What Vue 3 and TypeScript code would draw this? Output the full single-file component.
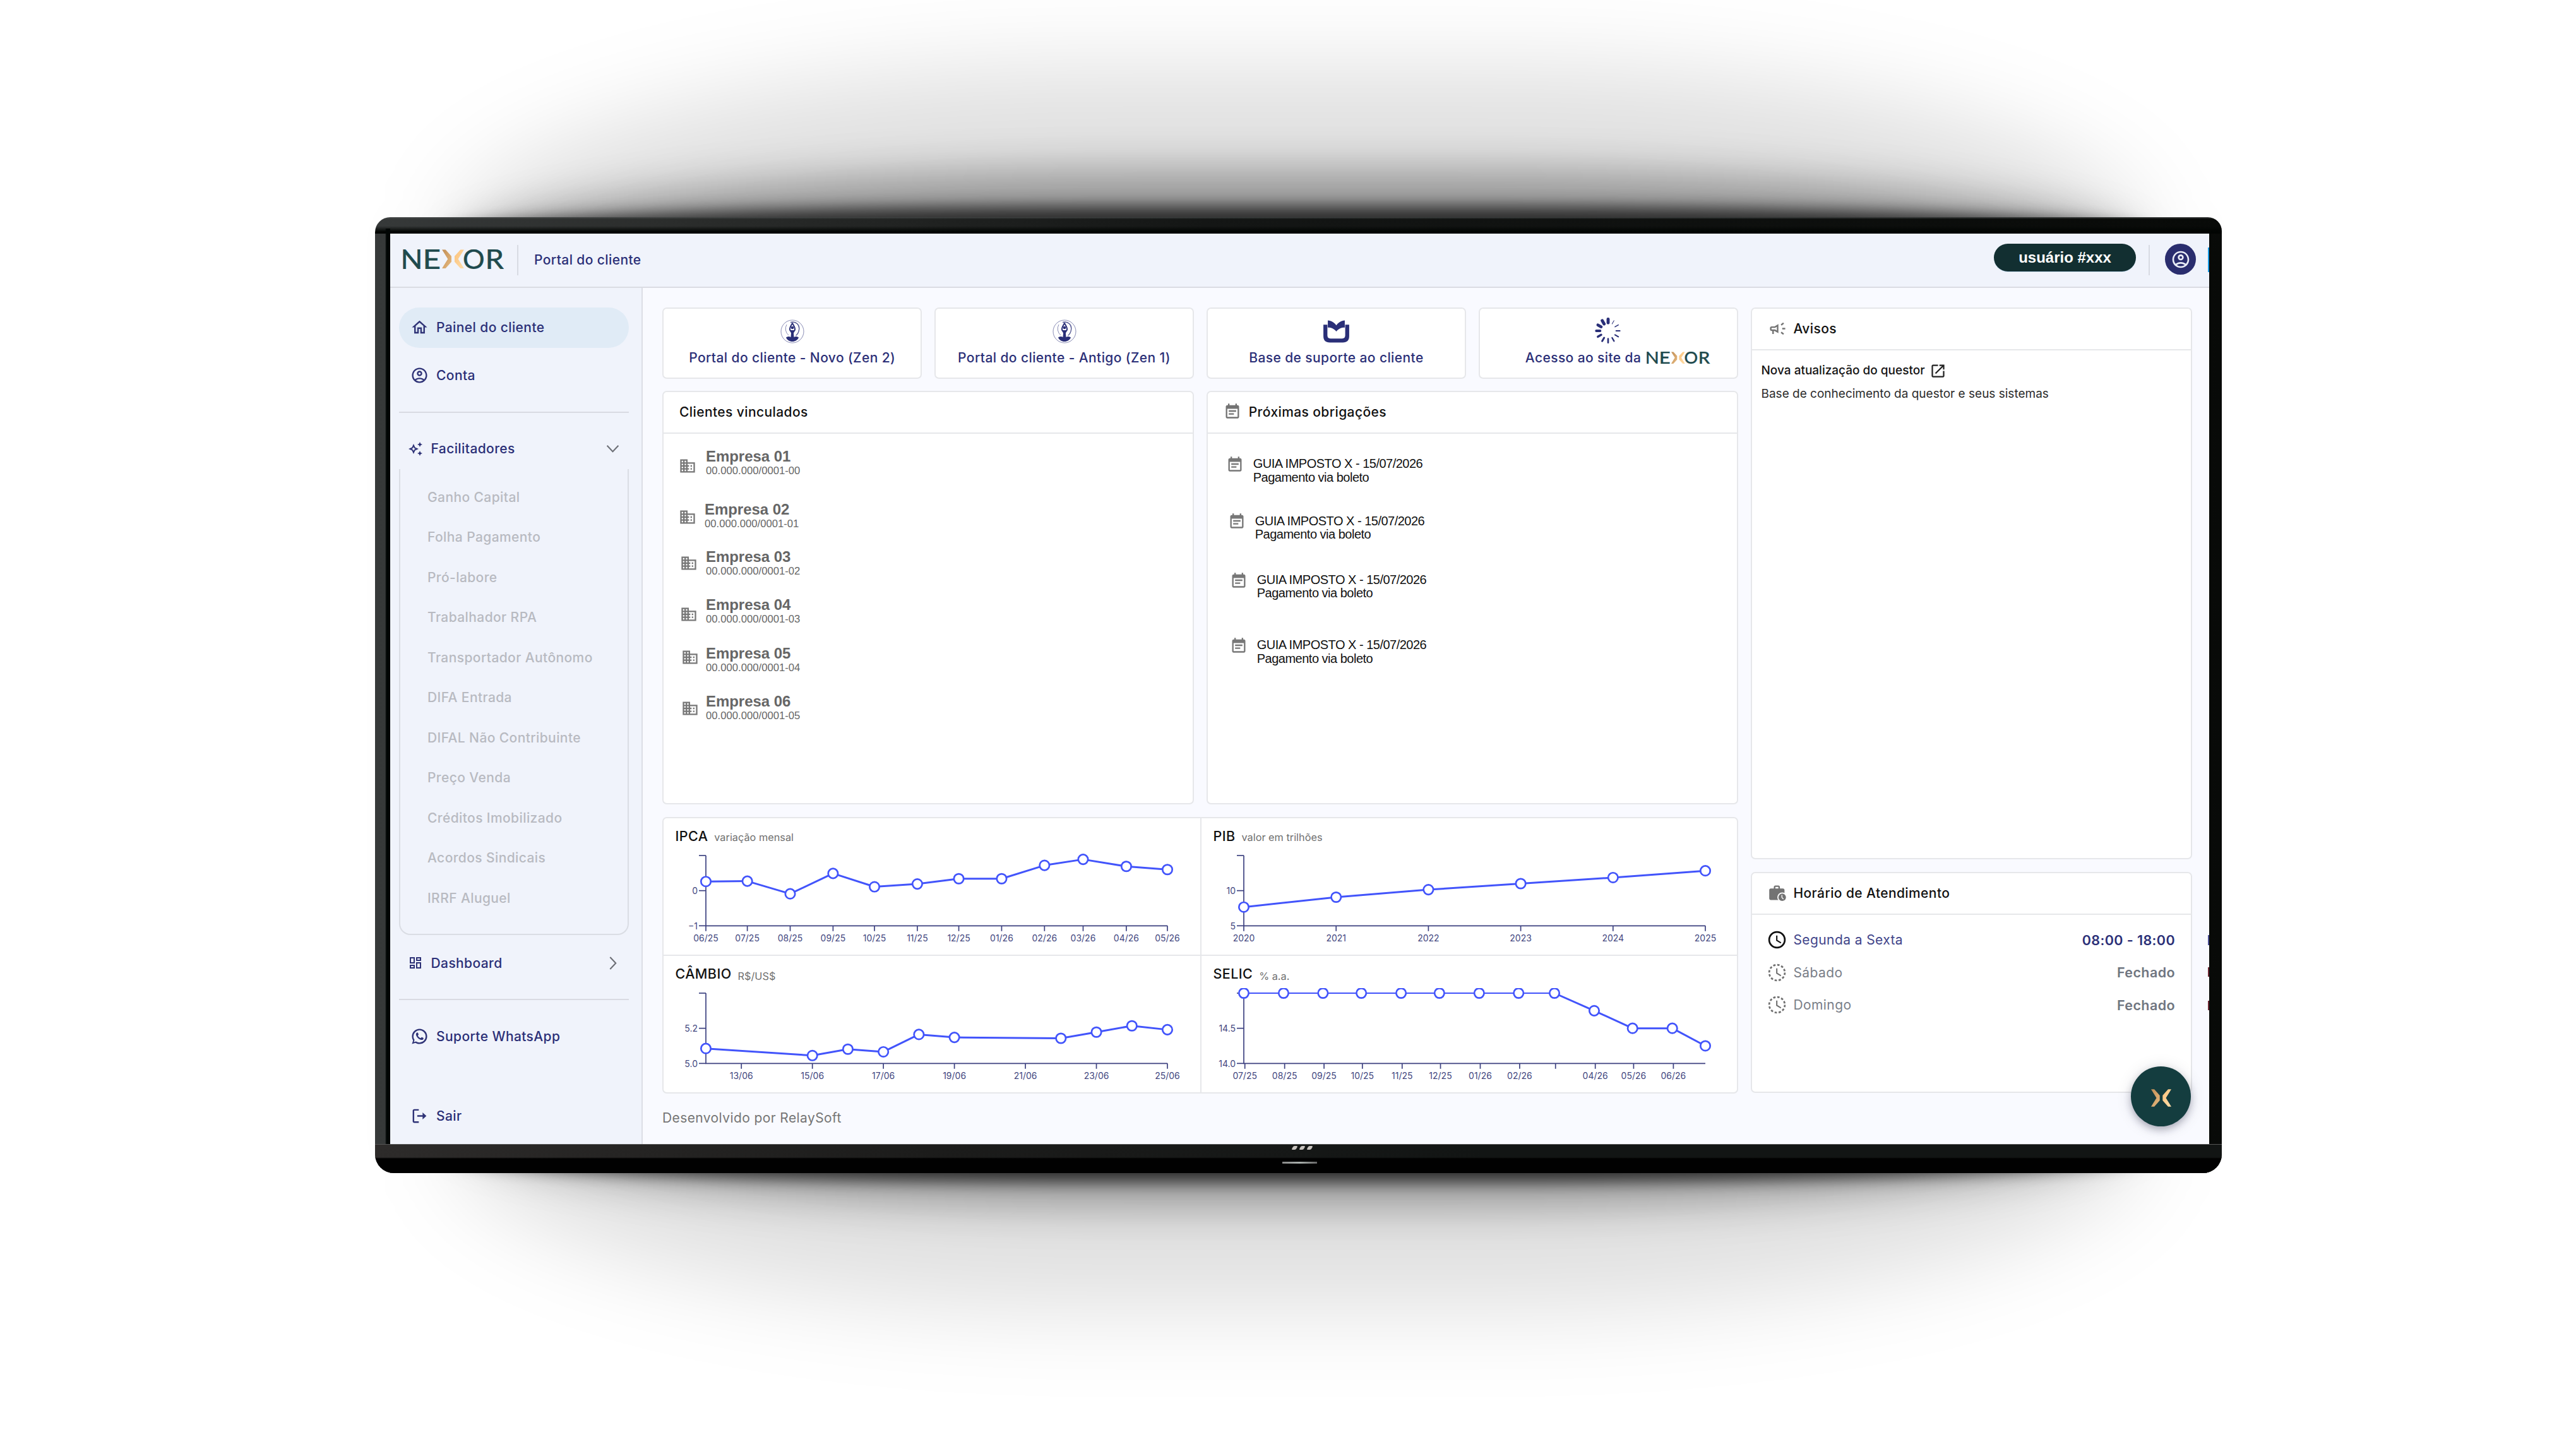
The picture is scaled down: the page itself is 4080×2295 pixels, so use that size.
<script setup lang="ts">
interface Entry { id: string; icon: { x: number; y: number }; text: { x: number; y: number } }
interface Chart {
  title: string
  unit: string
  domain: [number, number]
  yTicks: { value: number; label: string }[]
  span: number
  xTicks: { at: number; label: string }[]
  points: [number, number][]
}

const icons: Record<string, string> = {
  home: 'm12 5.69 5 4.5V18h-2v-6H9v6H7v-7.81l5-4.5M12 3 2 12h3v8h6v-6h2v6h6v-8h3L12 3z',
  account:
    'M12 2C6.48 2 2 6.48 2 12s4.48 10 10 10 10-4.48 10-10S17.52 2 12 2zM7.35 18.5C8.66 17.56 10.26 17 12 17s3.34.56 4.65 1.5c-1.31.94-2.91 1.5-4.65 1.5s-3.34-.56-4.65-1.5zm10.79-1.38C16.45 15.8 14.32 15 12 15s-4.45.8-6.14 2.12C4.7 15.73 4 13.95 4 12c0-4.42 3.58-8 8-8s8 3.58 8 8c0 1.95-.7 3.73-1.86 5.12zM12 6c-1.93 0-3.5 1.57-3.5 3.5S10.07 13 12 13s3.5-1.57 3.5-3.5S13.93 6 12 6zm0 5c-.83 0-1.5-.67-1.5-1.5S11.17 8 12 8s1.5.67 1.5 1.5S12.83 11 12 11z',
  sparkle:
    'M19 9l1.25-2.75L23 5l-2.75-1.25L19 1l-1.25 2.75L15 5l2.75 1.25zm0 6l-1.25 2.75L15 19l2.75 1.25L19 23l1.25-2.75L23 19l-2.75-1.25zM11.5 9.5 9 4 6.5 9.5 1 12l5.5 2.5L9 20l2.5-5.5L17 12l-5.5-2.5zm-1.51 3.49L9 15.17l-.99-2.18L5.83 12l2.18-.99L9 8.83l.99 2.18 2.18.99-2.18.99z',
  dashboard:
    'M19 5v2h-4V5h4M9 5v6H5V5h4m10 8v6h-4v-6h4M9 17v2H5v-2h4M21 3h-8v6h8V3zM11 3H3v10h8V3zm10 8h-8v10h8V11zm-10 4H3v6h8v-6z',
  whatsapp:
    'M16.75 13.96c.25.13.41.2.46.3.06.11.04.61-.21 1.18-.2.56-1.24 1.1-1.7 1.12-.46.02-.47.36-2.96-.73-2.49-1.09-3.99-3.75-4.11-3.92-.12-.17-.96-1.38-.92-2.61.05-1.22.69-1.8.95-2.04.24-.26.51-.29.68-.26h.47c.15 0 .36-.06.55.45l.69 1.87c.06.13.1.28.01.44l-.27.41-.39.42c-.12.12-.26.25-.12.5.12.26.62 1.09 1.32 1.78.91.88 1.71 1.17 1.95 1.3.24.14.39.12.54-.04l.81-.94c.19-.25.35-.19.58-.11l1.67.88M12 2a10 10 0 0 1 10 10 10 10 0 0 1-10 10c-1.97 0-3.8-.57-5.35-1.55L2 22l1.55-4.65A9.969 9.969 0 0 1 2 12 10 10 0 0 1 12 2m0 2a8 8 0 0 0-8 8c0 1.72.54 3.31 1.46 4.61L4.5 19.5l2.89-.96A7.95 7.95 0 0 0 12 20a8 8 0 0 0 8-8 8 8 0 0 0-8-8z',
  logout: 'M5 5h6V3H5c-1.1 0-2 .9-2 2v14c0 1.1.9 2 2 2h6v-2H5zM21 12l-5-4.5V11H9v2h7v3.5z',
  company:
    'M12 7V3H2v18h20V7H12zM6 19H4v-2h2v2zm0-4H4v-2h2v2zm0-4H4V9h2v2zm0-4H4V5h2v2zm4 12H8v-2h2v2zm0-4H8v-2h2v2zm0-4H8V9h2v2zm0-4H8V5h2v2zm10 12h-8v-2h2v-2h-2v-2h2v-2h-2V9h8v10zm-2-8h-2v2h2v-2zm0 4h-2v2h2v-2z',
  note: 'M19 4h-1V2h-2v2H8V2H6v2H5c-1.11 0-1.99.9-1.99 2L3 20c0 1.1.89 2 2 2h14c1.1 0 2-.9 2-2V6c0-1.1-.9-2-2-2zm0 16H5V9h14v11zM7 11h10v2H7zM7 15h7v2H7z',
  campaign:
    'M18 11v2h4v-2h-4zm-2 6.61c.96.71 2.21 1.65 3.2 2.39.4-.53.8-1.07 1.2-1.6-.99-.74-2.24-1.68-3.2-2.4-.4.54-.8 1.08-1.2 1.61zM20.4 5.6c-.4-.53-.8-1.07-1.2-1.6-.99.74-2.24 1.68-3.2 2.4.4.53.8 1.07 1.2 1.6.96-.72 2.21-1.65 3.2-2.4zM4 9c-1.1 0-2 .9-2 2v2c0 1.1.9 2 2 2h1v4h2v-4h1l5 3V6L8 9H4zm5.03 1.71L11 9.53v4.94l-1.97-1.18-.48-.29H4v-2h4.55l.48-.29z',
  external:
    'M19 19H5V5h7V3H5c-1.11 0-2 .9-2 2v14c0 1.1.89 2 2 2h14c1.1 0 2-.9 2-2v-7h-2v7zM14 3v2h3.59l-9.83 9.83 1.41 1.41L19 6.41V10h2V3h-7z',
}

const facilitators = [
  'Ganho Capital', 'Folha Pagamento', 'Pró-labore', 'Trabalhador RPA', 'Transportador Autônomo', 'DIFA Entrada',
  'DIFAL Não Contribuinte', 'Preço Venda', 'Créditos Imobilizado', 'Acordos Sindicais', 'IRRF Aluguel',
]

// Offsets of each entry inside its card body
const companies: Entry[] = [
  { id: '01', icon: { x: 24, y: 37.5 }, text: { x: 67, y: 22.5 } },
  { id: '02', icon: { x: 24, y: 118.5 }, text: { x: 65, y: 106.5 } },
  { id: '03', icon: { x: 26, y: 191.5 }, text: { x: 67, y: 181.5 } },
  { id: '04', icon: { x: 26, y: 272.3 }, text: { x: 67, y: 257.2 } },
  { id: '05', icon: { x: 27.5, y: 340.8 }, text: { x: 67, y: 334.2 } },
  { id: '06', icon: { x: 27.5, y: 421.8 }, text: { x: 67, y: 410.5 } },
]
const guides: Entry[] = [
  { id: '1', icon: { x: 29, y: 34 }, text: { x: 72, y: 37.8 } },
  { id: '2', icon: { x: 32, y: 124.5 }, text: { x: 75, y: 128 } },
  { id: '3', icon: { x: 35, y: 218 }, text: { x: 78, y: 221.3 } },
  { id: '4', icon: { x: 35, y: 321 }, text: { x: 78, y: 324.7 } },
]

const ticks = (at: number[], labels: string[]) => at.map((a, i) => ({ at: a, label: labels[i] }))
const months = [0, 117, 238, 359, 476, 597, 714, 835, 956, 1065, 1187, 1303]
const selicDays = [0, 112, 223, 331, 443, 551, 663, 774, 875, 987, 1095, 1207, 1300]

const charts: Chart[] = [
  {
    title: 'IPCA', unit: 'variação mensal', domain: [-1, 1], span: 1303,
    yTicks: [{ value: 1, label: '' }, { value: 0, label: '0' }, { value: -1, label: '−1' }],
    xTicks: ticks(months, ['06/25', '07/25', '08/25', '09/25', '10/25', '11/25', '12/25', '01/26', '02/26', '03/26', '04/26', '05/26']),
    points: [0.26, 0.27, -0.09, 0.49, 0.11, 0.19, 0.34, 0.34, 0.72, 0.89, 0.69, 0.6].map((v, i) => [months[i], v]),
  },
  {
    title: 'PIB', unit: 'valor em trilhões', domain: [5, 15], span: 5,
    yTicks: [{ value: 15, label: '' }, { value: 10, label: '10' }, { value: 5, label: '5' }],
    xTicks: ticks([0, 1, 2, 3, 4, 5], ['2020', '2021', '2022', '2023', '2024', '2025']),
    points: [7.66, 9.07, 10.14, 11, 11.86, 12.83].map((v, i) => [i, v]),
  },
  {
    title: 'CÂMBIO', unit: 'R$/US$', domain: [5, 5.4], span: 13,
    yTicks: [{ value: 5.4, label: '' }, { value: 5.2, label: '5.2' }, { value: 5, label: '5.0' }],
    xTicks: ticks([1, 3, 5, 7, 9, 11, 13], ['13/06', '15/06', '17/06', '19/06', '21/06', '23/06', '25/06']),
    points: [[0, 5.085], [3, 5.045], [4, 5.081], [5, 5.066], [6, 5.165], [7, 5.148], [10, 5.143], [11, 5.178], [12, 5.214], [13, 5.192]],
  },
  {
    title: 'SELIC', unit: '% a.a.', domain: [14, 15], span: 1300,
    yTicks: [{ value: 15, label: '' }, { value: 14.5, label: '14.5' }, { value: 14, label: '14.0' }],
    xTicks: ticks(
      selicDays.slice(0, 12).map((d) => d + 3),
      ['07/25', '08/25', '09/25', '10/25', '11/25', '12/25', '01/26', '02/26', '', '04/26', '05/26', '06/26'],
    ),
    points: [15, 15, 15, 15, 15, 15, 15, 15, 15, 14.75, 14.5, 14.5, 14.25].map((v, i) => [selicDays[i], v]),
  },
]

const AXIS = { left: 67, right: 798, top: 14, bottom: 125.3 }
const px = (c: Chart, v: number) => AXIS.left + (v / c.span) * (AXIS.right - AXIS.left)
const py = (c: Chart, v: number) =>
  AXIS.bottom - ((v - c.domain[0]) / (c.domain[1] - c.domain[0])) * (AXIS.bottom - AXIS.top)
// A stretch that runs along the top of the domain is drawn as a hairline
const segments = (c: Chart) =>
  c.points.slice(1).map(([x, y], i) => {
    const [x0, y0] = c.points[i]
    const flat = y === c.domain[1] && y0 === y
    return { x1: px(c, x0), y1: py(c, y0), x2: px(c, x), y2: py(c, y), w: flat ? 1.8 : 3 }
  })

const hours = [
  { day: 'Segunda a Sexta', time: '08:00 - 18:00', open: true },
  { day: 'Sábado', time: 'Fechado', open: false },
  { day: 'Domingo', time: 'Fechado', open: false },
]
const spokes = [4.4, 0.9, 1.4, 1.7, 1.9, 2.1, 2.4, 2.7, 3.1, 3.6, 4.2, 4.4]
const at = (p: { x: number; y: number }) => ({ left: p.x + 'px', top: p.y + 'px' })
</script>

<template>
  <div class="stage">
    <svg class="defs" width="0" height="0" aria-hidden="true">
      <defs>
        <linearGradient id="gold-a" x1="0" y1="0" x2="1" y2="1">
          <stop offset="0" stop-color="#c08d55" /><stop offset="1" stop-color="#e8bb80" />
        </linearGradient>
        <linearGradient id="gold-b" x1="0" y1="0" x2="1" y2="1">
          <stop offset="0" stop-color="#fbc27c" /><stop offset="1" stop-color="#ffdda8" />
        </linearGradient>
        <clipPath id="plot"><rect x="40" y="6" width="790" height="130" /></clipPath>
        <symbol id="mark" viewBox="0 0 35 30">
          <path d="M0 0h5.500L15 10.500v9L5.500 30H0l9.300-15z" fill="url(#gold-a)" />
          <path d="M35 0h-5.500L20 10.500v9L29.500 30H35l-9.300-15z" fill="url(#gold-b)" />
        </symbol>
        <symbol id="wordmark" viewBox="0 0 161 31">
          <g font-family="Lato, sans-serif" font-size="42.5" fill="#1f4a4d" stroke="#1f4a4d" stroke-width=".5">
            <text x="-3.5" y="30.5" textLength="35.5" lengthAdjust="spacingAndGlyphs">N</text>
            <text x="31.5" y="30.5" textLength="29" lengthAdjust="spacingAndGlyphs">E</text>
            <text x="95" y="30.5" textLength="35" lengthAdjust="spacingAndGlyphs">O</text>
            <text x="130.5" y="30.5" textLength="30" lengthAdjust="spacingAndGlyphs">R</text>
          </g>
          <use href="#mark" x="62" y="0.3" width="35" height="30" />
        </symbol>
      </defs>
    </svg>

    <div class="glow glow-far"></div>
    <div class="glow glow-mid"></div>
    <div class="glow glow-near"></div>

    <div class="monitor">
      <div class="screen">
        <header class="topbar">
          <svg class="logo"><use href="#wordmark" /></svg>
          <i class="vline first"></i>
          <span class="app-name">Portal do cliente</span>
          <span class="user">usuário #xxx</span>
          <i class="vline"></i>
          <span class="avatar"><svg viewBox="0 0 24 24"><path :d="icons.account" /></svg></span>
        </header>

        <div class="body">
          <nav class="sidebar">
            <a class="item active"><svg viewBox="0 0 24 24"><path :d="icons.home" /></svg>Painel do cliente</a>
            <a class="item conta"><svg viewBox="0 0 24 24"><path :d="icons.account" /></svg>Conta</a>
            <hr />
            <a class="item group">
              <svg class="small" viewBox="0 0 24 24"><path :d="icons.sparkle" /></svg>Facilitadores
              <svg class="chevron" viewBox="0 0 20 20"><path d="M1.500 5.500 10 14.500 18.500 5.500" /></svg>
            </a>
            <div class="submenu"><a v-for="f in facilitators" :key="f">{{ f }}</a></div>
            <a class="item group dash">
              <svg class="small" viewBox="0 0 24 24"><path :d="icons.dashboard" /></svg>Dashboard
              <svg class="chevron" viewBox="0 0 20 20"><path d="M6 1l8.500 9-8.500 9" /></svg>
            </a>
            <hr />
            <a class="item"><svg viewBox="0 0 24 24"><path :d="icons.whatsapp" /></svg>Suporte WhatsApp</a>
            <a class="item exit"><svg viewBox="0 0 24 24"><path :d="icons.logout" /></svg>Sair</a>
          </nav>

          <main class="main">
            <section class="left">
              <div class="shortcuts">
                <a v-for="t in ['Portal do cliente - Novo (Zen 2)', 'Portal do cliente - Antigo (Zen 1)']" :key="t" class="card shortcut">
                  <svg viewBox="0 0 38 38" fill="none" stroke="#2a2f78">
                    <circle cx="19" cy="19" r="18" stroke-width="1" opacity=".55" />
                    <path d="M10 8a13.500 13.500 0 0 0 3 17" stroke-width="1" opacity=".55" />
                    <path d="M16 4.500C25 2 31 9 29.500 16.500 29 21 26.500 24 24.500 25.500" stroke-width="1.400" opacity=".8" />
                    <path d="M19 5.500c-1 3-4.500 6.500-4 10.500.3 2 2 3 2.500 4M19 5.500c1 3 4.500 6.500 4 10.500-.3 2-2 3-2.500 4" stroke-width="2" />
                    <circle cx="19" cy="13" r="2.300" fill="#2a2f78" stroke="none" />
                    <path d="M15.800 17h6.400l-1.200 5 .5 6c2-1.500 5-1.500 7.500.5-1.500 4-5.500 6.500-10 6.500s-8.500-2.500-10-6.500c2.500-2 5.500-2 7.500-.5l.5-6z" fill="#2a2f78" stroke="none" />
                  </svg>
                  <span>{{ t }}</span>
                </a>
                <a class="card shortcut">
                  <svg class="book" viewBox="0 0 42 37" fill="#2a2f78">
                    <path d="M0 7.500h6.500V25c0 3.300 1.700 5 5 5h19c3.300 0 5-1.700 5-5V7.500H42V26c0 7-3.500 10.500-10.500 10.500h-21C3.500 36.500 0 33 0 26z" />
                    <path d="M7.200.5C13 1 18 4 21 8.500 24 4 29 1 34.800.5v11.500C29 12 24.500 14 21 18.500 17.500 14 13 12 7.200 12z" />
                  </svg>
                  <span>Base de suporte ao cliente</span>
                </a>
                <a class="card shortcut">
                  <svg class="spin" viewBox="-20 -20 40 40" stroke="#2a2f78" stroke-linecap="round">
                    <line v-for="(w, i) in spokes" :key="i" x1="0" y1="-11.500" x2="0" y2="-17" :stroke-width="w" :transform="`rotate(${i * 30})`" />
                  </svg>
                  <span class="site"><span>Acesso ao site da</span><svg class="logo-sm"><use href="#wordmark" /></svg></span>
                </a>
              </div>

              <div class="lists">
                <div class="card">
                  <h2>Clientes vinculados</h2>
                  <div class="canvas">
                    <template v-for="c in companies" :key="c.id">
                      <svg class="glyph" viewBox="0 0 24 24" :style="at(c.icon)"><path :d="icons.company" /></svg>
                      <div class="company" :style="at(c.text)">
                        <b>Empresa {{ c.id }}</b>
                        <span>00.000.000/0001-0{{ +c.id - 1 }}</span>
                      </div>
                    </template>
                  </div>
                </div>
                <div class="card">
                  <h2><svg viewBox="0 0 24 24"><path :d="icons.note" /></svg>Próximas obrigações</h2>
                  <div class="canvas">
                    <template v-for="g in guides" :key="g.id">
                      <svg class="glyph" viewBox="0 0 24 24" :style="at(g.icon)"><path :d="icons.note" /></svg>
                      <div class="guide" :style="at(g.text)">GUIA IMPOSTO X - 15/07/2026<br />Pagamento via boleto</div>
                    </template>
                  </div>
                </div>
              </div>

              <div class="card charts">
                <div v-for="c in charts" :key="c.title" class="chart">
                  <h3>{{ c.title }}<small>{{ c.unit }}</small></h3>
                  <svg width="850" height="165">
                    <g class="axis">
                      <path :d="`M${AXIS.left} ${AXIS.top}V${AXIS.bottom}H${AXIS.right}`" />
                      <path v-for="t in c.yTicks" :key="t.value" :d="`M${AXIS.left} ${py(c, t.value)}h-11`" />
                      <path v-for="t in c.xTicks" :key="t.at" :d="`M${px(c, t.at)} ${AXIS.bottom}v8.500`" />
                    </g>
                    <g class="labels">
                      <text v-for="t in c.yTicks" :key="t.value" :x="AXIS.left - 13" :y="py(c, t.value) + 5.5" text-anchor="end">{{ t.label }}</text>
                      <text v-for="t in c.xTicks" :key="t.at" :x="px(c, t.at)" :y="AXIS.bottom + 25" text-anchor="middle">{{ t.label }}</text>
                    </g>
                    <g class="series" clip-path="url(#plot)">
                      <line v-for="(s, i) in segments(c)" :key="i" :x1="s.x1" :y1="s.y1" :x2="s.x2" :y2="s.y2" :stroke-width="s.w" />
                      <circle v-for="([x, y], i) in c.points" :key="i" :cx="px(c, x)" :cy="py(c, y)" r="7.700" />
                    </g>
                  </svg>
                </div>
              </div>
              <footer>Desenvolvido por RelaySoft</footer>
            </section>

            <aside class="right">
              <div class="card notices">
                <h2><svg class="mega" viewBox="0 0 24 24"><path :d="icons.campaign" /></svg>Avisos</h2>
                <p class="notice-title">Nova atualização do questor<svg viewBox="0 0 24 24"><path :d="icons.external" /></svg></p>
                <p class="notice-text">Base de conhecimento da questor e seus sistemas</p>
              </div>
              <div class="card hours">
                <h2>
                  <svg class="mega" viewBox="0 0 24 24">
                    <path d="M19 6h-4V4c0-1.100-.9-2-2-2H9c-1.100 0-2 .9-2 2v2H3c-1.100 0-2 .9-2 2v11c0 1.100.9 2 2 2h16c1.100 0 2-.9 2-2V8c0-1.100-.9-2-2-2zM9 4h4v2H9z" />
                    <circle cx="18" cy="17.500" r="6.400" fill="#fff" /><circle cx="18" cy="17.500" r="4.900" />
                    <path d="M17.600 14.500v3.300l2 2" fill="none" stroke="#fff" stroke-width="1.100" />
                  </svg>Horário de Atendimento
                </h2>
                <div v-for="h in hours" :key="h.day" class="hour" :class="{ open: h.open }">
                  <svg viewBox="0 0 24 24" fill="none" stroke="currentColor">
                    <circle cx="12" cy="12" r="9" stroke-width="2" :stroke-dasharray="h.open ? 'none' : '2.700 2.012'" />
                    <path d="M11.750 7v5.600l4.800 2.900" stroke-width="1.500" />
                  </svg>
                  <span>{{ h.day }}</span><b>{{ h.time }}</b>
                </div>
              </div>
            </aside>
          </main>
        </div>

        <button class="fab"><svg><use href="#mark" /></svg></button>
        <i class="edge sky"></i><i class="edge navy"></i><i class="edge wine"></i><i class="edge wine low"></i>
      </div>
      <div class="chin"><span class="brand"><i></i><i></i><i></i></span><span class="notch"></span></div>
    </div>
  </div>
</template>

<style>
html, body { margin: 0; background: #fff; overflow: hidden; }
</style>

<style scoped>
.stage { position: relative; box-sizing: border-box; width: 4080px; height: 2295px; padding: 344px 0 0 594px; background: #fff; overflow: hidden; font-family: Inter, "Liberation Sans", sans-serif; font-size: 21px; letter-spacing: .4px; color: #2b2f77; }
.stage * { box-sizing: border-box; }
.defs { position: absolute; }

.glow { position: absolute; }
.glow-far { left: 720px; top: 105px; width: 2670px; height: 1970px; border-radius: 38% / 14%; background: rgba(0, 0, 0, .12); filter: blur(70px); }
.glow-mid { left: 715px; top: 270px; width: 2680px; height: 1640px; border-radius: 40% / 8%; background: rgba(0, 0, 0, .32); filter: blur(32px); }
.glow-near { left: 700px; top: 327px; width: 2710px; height: 1545px; border-radius: 38% / 3%; background: rgba(0, 0, 0, .7); filter: blur(12px); }

.monitor { position: relative; width: 2925px; height: 1514px; padding: 26px 0 0 24px; border-radius: 24px 22px 30px 30px; overflow: hidden;
  background:
    linear-gradient(90deg, transparent 16px, #010504 18px) 0 18px / 24px 1450px no-repeat,
    linear-gradient(180deg, rgba(80, 84, 84, .7) 0, transparent 3px, transparent 14px, #010402 23px) 0 0 / 100% 26px no-repeat,
    linear-gradient(90deg, #363939 0, #2b2d2c 16%, #141615 45%, #080a08 100%); }
.screen { position: relative; display: flex; flex-direction: column; width: 2881px; height: 1442px; background: #f9faff; overflow: hidden; }
.chin { display: flex; flex-direction: column; align-items: center; height: 46px; margin: 0 0 0 -24px; padding-left: 3px; border-top: 1px solid #555;
  background: linear-gradient(180deg, transparent 20px, #010101 22px), linear-gradient(90deg, #2d2b2a, #1c1c1b 30%, #121514 60%, #121514); }
.brand { display: flex; gap: 5px; height: 25px; padding: 2px 0 0 8px; }
.brand i { width: 7px; height: 6px; background: #c9c4c0; transform: skewX(-28deg); border-radius: 2px; }
.notch { width: 55px; height: 3px; margin-top: 2px; background: linear-gradient(90deg, #888, #aab0ad, #666); }

.topbar { display: flex; align-items: center; flex: none; height: 86px; border-bottom: 2px solid #dadce3; background: #f0f3fb; }
.logo { width: 161px; height: 31px; margin: -3px 0 0 20px; overflow: visible; flex: none; }
.vline { width: 2px; height: 48px; background: #d8dbe3; }
.vline.first { margin: -1px 25px 0 20px; }
.app-name { margin-top: -2px; font-weight: 500; flex: 1; }
.user { width: 225px; height: 44px; margin-right: 20px; margin-top: -9px; border-radius: 22px; background: #122f31; color: #fff; font: bold 24px/44px "Liberation Sans", Arial, sans-serif; letter-spacing: 0; text-align: center; box-shadow: 0 1px 0 #cfe4f7; }
.avatar { display: grid; place-items: center; width: 49px; height: 49px; margin: -3px 21px 0 24px; border-radius: 50%; background: #2a2d6e; }
.avatar svg { width: 32px; fill: #e9ecf6; }

.body { display: flex; flex: 1; min-height: 0; }
.sidebar { width: 400px; flex: none; padding: 30.500px 20px 0 13.500px; border-right: 2px solid #dcdee6; background: #f0f3fb; font-weight: 500; }
.sidebar hr { height: 2px; margin: 25px 0; border: 0; background: #d9dbe3; }
.item { display: flex; align-items: center; height: 64px; padding-left: 18.500px; border-radius: 32px; }
.item svg { width: 29px; height: 29px; margin-right: 12px; fill: #2f3377; flex: none; }
.item.active { background: #e0ebf6; }
.item.conta { margin-top: 12px; }
.item.group { padding-left: 14px; }
.item svg.small { width: 24px; height: 24px; margin-right: 13px; }
.item svg.chevron { width: 21px; height: 21px; margin: 0 15px 0 auto; fill: none; stroke: #6d6f76; stroke-width: 2; }
.submenu { height: 738px; padding: 13px 0 0 43.500px; border: 2px solid #dadde4; border-top: 0; border-radius: 0 0 18px 18px; color: #b8bac1; }
.submenu a { display: block; height: 63.500px; line-height: 63.500px; }
.item.dash { margin-top: 12.500px; }
.item.exit { margin-top: 62px; }

.main { display: flex; gap: 19.500px; padding: 31px 0 0 31px; }
.left { width: 1704px; flex: none; }
.right { width: 699.500px; flex: none; }
.card { border: 2px solid #e6e7ea; border-radius: 7px; background: #fff; }
.shortcuts { display: grid; grid-template-columns: repeat(4, 1fr); gap: 19.500px; }
.shortcut { display: flex; flex-direction: column; align-items: center; height: 113px; padding-top: 17px; font-weight: 500; line-height: 30px; white-space: nowrap; }
.shortcut > svg { height: 38px; margin-bottom: 8px; }
.shortcut > svg.book { width: 41px; height: 36px; margin: 1px 0 9px; }
.shortcut > svg.spin { width: 44px; height: 44px; margin: -4px 0 6px; overflow: visible; }
.site { display: flex; gap: 8.500px; align-items: center; padding-left: 30px; }
.logo-sm { width: 101px; height: 19.500px; }

.lists { display: grid; grid-template-columns: 1fr 1fr; gap: 19.500px; height: 655px; margin: 19px 0 20px; }
h2 { display: flex; align-items: center; height: 65.500px; margin: 0; padding-left: 25px; border-bottom: 2px solid #e6e7ea; color: #111; font-size: 21px; font-weight: 500; }
h2 svg { width: 28px; height: 28px; margin: -3px 12px 0 0; fill: #737373; }
.canvas { position: relative; height: 585px; }
.glyph { position: absolute; width: 28px; height: 28px; fill: #777; }
.company { position: absolute; color: #666; font-family: "Liberation Sans", Arial, sans-serif; letter-spacing: 0; white-space: nowrap; }
.company b { display: block; font-size: 24px; line-height: 28px; letter-spacing: -.05px; }
.company span { display: block; font-size: 16.700px; line-height: 18px; }
.guide { position: absolute; color: #111; font: 20px/21.500px "Liberation Sans", Arial, sans-serif; letter-spacing: -.5px; white-space: nowrap; }

.charts { display: grid; grid-template-columns: 852px 1fr; grid-template-rows: 218px 1fr; height: 438px; }
.chart:nth-child(odd) { border-right: 2px solid #e6e7ea; }
.chart:nth-child(-n + 2) { border-bottom: 2px solid #e6e7ea; }
.chart h3 { display: flex; align-items: baseline; height: 45px; margin: 0; padding: 14px 0 0 18.500px; color: #111; font-size: 21.500px; font-weight: 500; line-height: 28px; }
.chart small { margin-left: 10px; color: #6f6f6f; font-size: 16.300px; font-weight: 400; letter-spacing: 0; }
.chart:nth-child(n + 3) small { position: relative; top: 2px; }
.chart svg { display: block; overflow: visible; }
.axis path { fill: none; stroke: #3d4180; stroke-width: 1.700; }
.labels text { fill: #43477f; font-size: 14px; letter-spacing: 0; }
.series line { stroke: #4254fb; }
.series circle { fill: #fff; stroke: #4254fb; stroke-width: 2.700; }
footer { margin-top: 24px; color: #757575; line-height: 30px; }

.notices { height: 874px; margin-bottom: 20px; }
.right h2 svg.mega { width: 29px; height: 29px; margin: 0 11px 0 1px; }
.notice-title, .notice-text { margin: 0; padding-left: 15px; color: #151515; font-size: 19px; letter-spacing: 0; line-height: 28px; }
.notice-title { display: flex; align-items: center; margin-top: 18.500px; font-weight: 500; }
.notice-title svg { width: 27px; height: 27px; margin-left: 7px; fill: #222; }
.notice-text { margin-top: 8.500px; color: #2c2c2c; }
.hours { height: 350px; }
.hours h2 { margin-bottom: 14.500px; }
.hour { display: flex; align-items: center; height: 51.500px; padding: 0 25px 0 23px; color: #797e88; }
.hour svg { width: 33px; height: 33px; margin-right: 10px; color: #707070; }
.hour.open { color: #41458a; }
.hour.open svg { color: #111; }
.hour span { flex: 1; }
.hour b { color: #6f7580; font-size: 21.500px; font-weight: 600; }
.hour.open b { color: #2b2f77; }

.fab { position: absolute; right: 29px; bottom: 28px; display: grid; place-items: center; width: 95px; height: 95px; padding: 0; border: 0; border-radius: 50%; background: #143d3f; box-shadow: 0 5px 12px rgba(30, 30, 60, .3), 0 2px 26px rgba(30, 30, 60, .12); }
.fab svg { width: 32px; height: 28px; margin-top: 4px; }
.edge { position: absolute; right: 0; width: 2px; }
.edge.sky { top: 22px; height: 39px; background: #199be4; }
.edge.navy { top: 1111px; height: 16px; background: #4a4e92; }
.edge.wine { top: 1162px; height: 15px; background: #6b2733; }
.edge.wine.low { top: 1215px; }
</style>
